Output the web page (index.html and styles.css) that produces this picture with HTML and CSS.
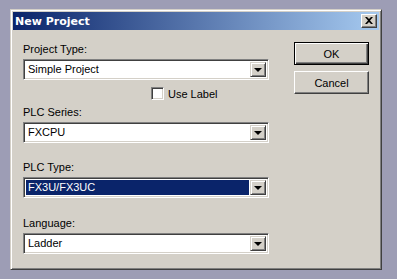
FILE: index.html
```html
<!DOCTYPE html>
<html lang="en">
<head>
  <meta charset="UTF-8">
  <link rel="stylesheet" href="styles.css">
  <title>New Project</title>
</head>
<body>
  <div class="window">
    <div class="titlebar">
      <span class="title">New Project</span>
      <div class="close">
        <svg width="8" height="7" viewBox="0 0 8 7"><path d="M0 0h2l2 2 2-2h2L5 3.5 8 7H6L4 5 2 7H0l3-3.5z" fill="#000"/></svg>
      </div>
    </div>
    <div class="content">
      <div class="fields">
        <div class="label">Project Type:</div>
        <div class="combo first"><span class="value">Simple Project</span><div class="arrow"><i></i></div></div>
        <div class="check-row">
          <div class="checkbox"></div>
          <span>Use Label</span>
        </div>
        <div class="label series">PLC Series:</div>
        <div class="combo"><span class="value">FXCPU</span><div class="arrow"><i></i></div></div>
        <div class="label">PLC Type:</div>
        <div class="combo"><span class="value selected">FX3U/FX3UC</span><div class="arrow"><i></i></div></div>
        <div class="label last">Language:</div>
        <div class="combo"><span class="value">Ladder</span><div class="arrow"><i></i></div></div>
      </div>
      <div class="buttons">
        <button class="default">OK</button>
        <button>Cancel</button>
      </div>
    </div>
  </div>
</body>
</html>
```

FILE: styles.css
```css
html, body {
  margin: 0;
  padding: 0;
}

body {
  background: #9d9db5;
  font-family: "Liberation Sans", Arial, sans-serif;
  font-size: 11px;
  color: #000;
  padding: 9px 0 0 10px;
  height: 279px;
  box-sizing: border-box;
}

.window {
  width: 372px;
  height: 261px;
  box-sizing: border-box;
  background: #d4d0c8;
  padding: 2px;
  border: 1px solid;
  border-color: #d4d0c8 #404040 #404040 #d4d0c8;
  box-shadow: inset 1px 1px 0 #fff, inset -1px -1px 0 #808080;
  display: flex;
  flex-direction: column;
}

.titlebar {
  height: 18px;
  background: linear-gradient(to right, #0a246a, #a6caf0);
  display: flex;
  align-items: center;
  padding: 0 2px 0 2px;
}

.title {
  flex-grow: 1;
  color: #fff;
  font-weight: bold;
  font-family: "DejaVu Sans", sans-serif;
  font-size: 11px;
}

.close {
  width: 16px;
  height: 14px;
  box-sizing: border-box;
  background: #d4d0c8;
  border: 1px solid;
  border-color: #fff #404040 #404040 #fff;
  box-shadow: inset -1px -1px 0 #808080;
  display: flex;
  align-items: center;
  justify-content: center;
  padding: 0 1px 1px 0;
}

.content {
  display: flex;
  flex-direction: row;
  padding: 0 0 0 10px;
}

.fields {
  width: 246px;
  display: flex;
  flex-direction: column;
  padding-top: 13px;
}

.label {
  height: 13px;
  line-height: 13px;
  margin-bottom: 3px;
}

.series {
  margin-top: 6px;
}

.last {
  margin-top: 1px;
}

.combo {
  height: 21px;
  box-sizing: border-box;
  background: #fff;
  border: 1px solid;
  border-color: #808080 #fff #fff #808080;
  box-shadow: inset 1px 1px 0 #404040, inset -1px -1px 0 #d4d0c8;
  display: flex;
  align-items: stretch;
  padding: 2px;
  margin-bottom: 18px;
}

.combo.first {
  margin-bottom: 20px;
}

.combo:last-child {
  margin-bottom: 0;
}

.value {
  flex-grow: 1;
  line-height: 15px;
  padding-left: 2px;
  margin-right: 1px;
}

.value.selected {
  background: #0a246a;
  color: #fff;
}

.arrow {
  width: 16px;
  box-sizing: border-box;
  background: #d4d0c8;
  border: 1px solid;
  border-color: #d4d0c8 #404040 #404040 #d4d0c8;
  box-shadow: inset 1px 1px 0 #fff, inset -1px -1px 0 #808080;
  display: flex;
  align-items: center;
  justify-content: center;
}

.arrow i {
  width: 0;
  height: 0;
  border-left: 4px solid transparent;
  border-right: 4px solid transparent;
  border-top: 4px solid #000;
  margin-left: -1px;
}

.check-row {
  display: flex;
  align-items: center;
  column-gap: 4px;
  padding-left: 128px;
  margin: -13px 0 0;
  height: 13px;
}

.checkbox {
  width: 13px;
  height: 13px;
  box-sizing: border-box;
  background: #fff;
  border: 1px solid;
  border-color: #808080 #fff #fff #808080;
  box-shadow: inset 1px 1px 0 #404040, inset -1px -1px 0 #d4d0c8;
}

.buttons {
  display: flex;
  flex-direction: column;
  row-gap: 6px;
  margin-left: 25px;
  padding-top: 12px;
}

button {
  width: 75px;
  height: 23px;
  font-family: "Liberation Sans", Arial, sans-serif;
  font-size: 11px;
  color: #000;
  background: #d4d0c8;
  border: 1px solid;
  border-color: #fff #404040 #404040 #fff;
  box-shadow: inset -1px -1px 0 #808080;
  padding: 0;
}

button.default {
  border: 1px solid #000;
  box-shadow: inset 1px 1px 0 #fff, inset -1px -1px 0 #404040, inset -2px -2px 0 #808080;
}
```
